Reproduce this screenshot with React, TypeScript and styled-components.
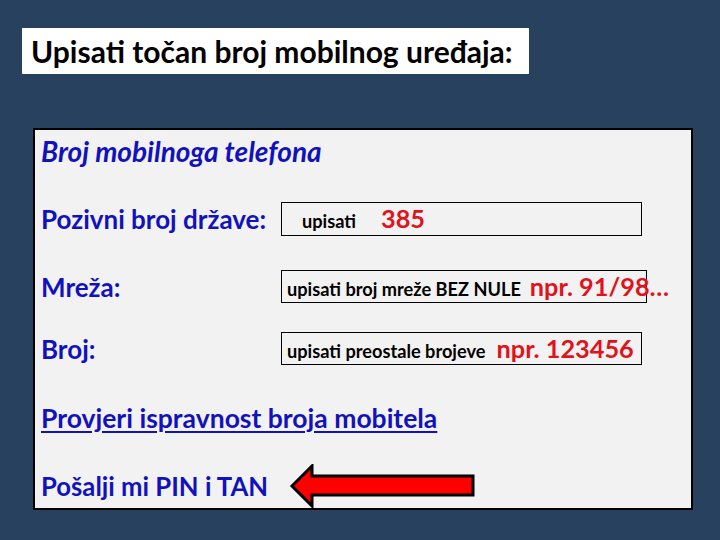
import React from 'react'
import styled, { createGlobalStyle } from 'styled-components'

const GlobalStyle = createGlobalStyle`
	html, body {
		margin: 0;
		padding: 0;
		background: #27415f;
	}
	body {
		font-family: Lato, 'Open Sans', 'Noto Sans', sans-serif;
	}
`

const Page = styled.div`
	width: 720px;
	height: 540px;
	box-sizing: border-box;
	padding: 28px 0 0 22px;
	overflow: hidden;
`

const TitleBox = styled.div`
	width: 507px;
	height: 46px;
	box-sizing: border-box;
	padding-left: 9px;
	background: #fff;
	display: flex;
	align-items: center;
	color: #000;
	font-size: 30px;
	font-weight: 700;
	white-space: nowrap;
`

const Panel = styled.div`
	margin: 54px 0 0 11px;
	width: 660px;
	height: 382px;
	box-sizing: border-box;
	border: 2px solid #000;
	background: #f2f2f2;
	padding: 0 0 0 6px;
	display: flex;
	flex-direction: column;
	color: #1212bd;
`

const Heading = styled.div`
	margin-top: 6px;
	height: 30px;
	line-height: 30px;
	font-size: 28px;
	font-weight: 700;
	font-style: italic;
	white-space: nowrap;
`

const FieldRow = styled.div<{ $top: number; $height: number }>`
	margin-top: ${(p) => p.$top}px;
	height: ${(p) => p.$height}px;
	display: grid;
	grid-template-columns: 240px auto;
	align-items: center;
`

const Label = styled.div`
	font-size: 26px;
	font-weight: 700;
	white-space: nowrap;
`

const InputBox = styled.div<{ $width: number; $align?: 'center' | 'bottom'; $pad: number }>`
	width: ${(p) => p.$width}px;
	height: 100%;
	box-sizing: border-box;
	border: 1px solid #000;
	padding-left: ${(p) => p.$pad}px;
	padding-bottom: ${(p) => (p.$align === 'bottom' ? 3 : 0)}px;
	display: flex;
	align-items: ${(p) => (p.$align === 'bottom' ? 'flex-end' : 'center')};
	white-space: nowrap;
	overflow: visible;
`

const Line = styled.span`
	line-height: 1;
`

const Hint = styled.span`
	color: #000;
	font-size: 18.2px;
	font-weight: 700;
`

const Example = styled.span<{ $gap?: number }>`
	color: #e0121b;
	font-size: 25.3px;
	font-weight: 700;
	margin-left: ${(p) => p.$gap ?? 6}px;
`

const CheckLink = styled.a`
	margin-top: 38px;
	height: 30px;
	line-height: 30px;
	font-size: 26.5px;
	font-weight: 700;
	color: #1212bd;
	text-decoration: underline;
	text-decoration-thickness: 2px;
	text-underline-offset: 3px;
	align-self: flex-start;
	white-space: nowrap;
	cursor: pointer;
`

const SendRow = styled.div`
	margin-top: 31px;
	height: 44px;
	display: flex;
	align-items: center;
`

const SendText = styled.span`
	font-size: 25.7px;
	font-weight: 700;
	white-space: nowrap;
`

const ArrowIcon = styled.svg`
	margin-left: 21px;
	flex: none;
`

const LeftArrow = () => (
	<ArrowIcon width='186' height='44' viewBox='0 0 186 44'>
		<polygon
			points='3,22 23,2 23,12 184,12 184,31 23,31 23,42'
			fill='#ff0000'
			stroke='#000'
			strokeWidth='3'
			strokeLinejoin='miter'
		/>
	</ArrowIcon>
)

const App = (): JSX.Element => {
	return (
		<>
			<GlobalStyle />
			<Page>
				<TitleBox>Upisati točan broj mobilnog uređaja:</TitleBox>
				<Panel>
					<Heading>Broj mobilnoga telefona</Heading>

					<FieldRow $top={36} $height={34}>
						<Label>Pozivni broj države:</Label>
						<InputBox $width={361} $pad={20}>
							<Line>
								<Hint>upisati</Hint>
								<Example $gap={25}>385</Example>
							</Line>
						</InputBox>
					</FieldRow>

					<FieldRow $top={34} $height={33}>
						<Label>Mreža:</Label>
						<InputBox $width={366} $pad={5} $align='bottom'>
							<Line>
								<Hint>upisati broj mreže BEZ NULE</Hint>
								<Example $gap={9}>npr. 91/98…</Example>
							</Line>
						</InputBox>
					</FieldRow>

					<FieldRow $top={29} $height={33}>
						<Label>Broj:</Label>
						<InputBox $width={361} $pad={5} $align='bottom'>
							<Line>
								<Hint>upisati preostale brojeve</Hint>
								<Example $gap={11}>npr. 123456</Example>
							</Line>
						</InputBox>
					</FieldRow>

					<CheckLink>Provjeri ispravnost broja mobitela</CheckLink>

					<SendRow>
						<SendText>Pošalji mi PIN i TAN</SendText>
						<LeftArrow />
					</SendRow>
				</Panel>
			</Page>
		</>
	)
}

export default App
